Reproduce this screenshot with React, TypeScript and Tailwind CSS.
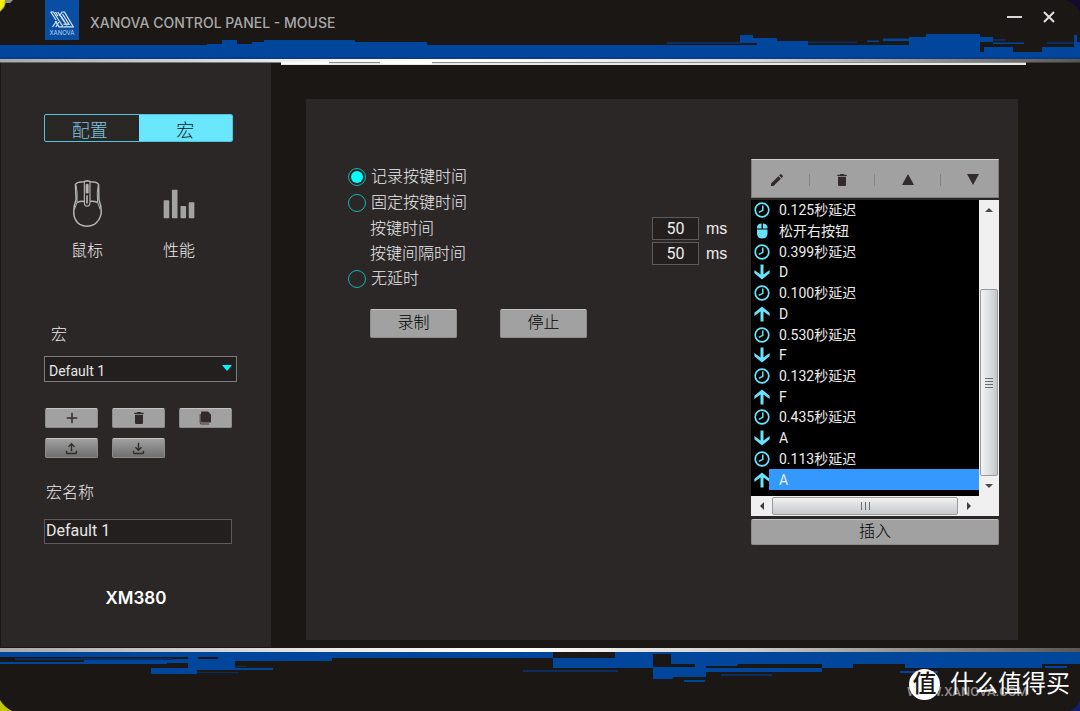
import React, { useState } from "react";
import { MdAdd, MdDelete, MdEdit, MdOutlineFileDownload, MdOutlineFileUpload } from "react-icons/md";

type EventKind = "delay" | "mouse" | "down" | "up";
type MacroEvent = { kind: EventKind; text: string };

const EVENTS: MacroEvent[] = [
  { kind: "delay", text: "0.125秒延迟" },
  { kind: "mouse", text: "松开右按钮" },
  { kind: "delay", text: "0.399秒延迟" },
  { kind: "down", text: "D" },
  { kind: "delay", text: "0.100秒延迟" },
  { kind: "up", text: "D" },
  { kind: "delay", text: "0.530秒延迟" },
  { kind: "down", text: "F" },
  { kind: "delay", text: "0.132秒延迟" },
  { kind: "up", text: "F" },
  { kind: "delay", text: "0.435秒延迟" },
  { kind: "down", text: "A" },
  { kind: "delay", text: "0.113秒延迟" },
  { kind: "up", text: "A" },
];

const GREY_BUTTON =
  "flex items-center justify-center rounded-[2px] border border-[#8c8c8c] border-t-[#c4c4c4] bg-[#a1a1a1] text-[#332b2b]";

const TEXT_BUTTON = `${GREY_BUTTON} pb-px text-black`;

function HeaderArt() {
  return (
    <svg className="absolute inset-x-0 top-0 h-[65px] w-full" viewBox="0 0 1080 65" preserveAspectRatio="none" aria-hidden="true">
      <defs>
        <linearGradient id="railTop" x1="0" x2="1" y1="0" y2="0">
          <stop offset="0" stopColor="#a8a8a8" />
          <stop offset="0.3" stopColor="#f4f4f4" />
          <stop offset="0.45" stopColor="#ffffff" />
          <stop offset="0.7" stopColor="#d8d6d4" />
          <stop offset="0.88" stopColor="#8a8784" />
          <stop offset="1" stopColor="#5a5653" />
        </linearGradient>
      </defs>
      <path d="M0 0H13L10 3H6L4 8L0 12Z" fill="#8f8f8a" />
      <path d="M0 0H5L4 6L0 11Z" fill="#f2f200" />
      <path d="M1066 0H1080V12Q1075 3 1066 0Z" fill="#140a2c" />
      <path
        fill="#00469c"
        d="M0 45H207V44H222V40H237V44H252V42H264V40H355V42H427V45H757V43H740V35H753V38H777V41H808V45H909V37H926V34H980V52H984V47H1013V52H1042V47H1074V35H1077V42H1080V59H0Z"
      />
      <path fill="#00469c" d="M867 40.500H879V42H867ZM883 38.500H909V41H883ZM980 37H993V42H980ZM993 42.500H1024V44H993Z" />
      <path fill="#0d2c5f" d="M667 42H740V44H667ZM808 41.500H857V43H808ZM993 39H1005V41H993ZM1047 42H1074V44H1047Z" />
      <rect x="0" y="57.500" width="1080" height="1" fill="#0a3578" />
      <rect x="0" y="59" width="1080" height="3.500" fill="url(#railTop)" />
      <rect x="329" y="62" width="697" height="1" fill="#8b8e8b" />
      <rect x="281" y="63" width="745" height="2" fill="#e6e8e6" />
      <rect x="281" y="62" width="48" height="2" fill="#ffffff" />
      <rect x="380" y="61" width="52" height="3" fill="#ffffff" />
    </svg>
  );
}

function FooterArt() {
  return (
    <svg className="absolute inset-0 h-full w-full" viewBox="0 647 1080 64" preserveAspectRatio="none" aria-hidden="true">
      <defs>
        <linearGradient id="railBottom" x1="0" x2="1" y1="0" y2="0">
          <stop offset="0" stopColor="#a8a8a8" />
          <stop offset="0.3" stopColor="#e8e8e8" />
          <stop offset="0.48" stopColor="#ffffff" />
          <stop offset="0.7" stopColor="#cccac8" />
          <stop offset="0.88" stopColor="#83807d" />
          <stop offset="1" stopColor="#5a5653" />
        </linearGradient>
      </defs>
      <rect x="0" y="648" width="1080" height="4" fill="url(#railBottom)" />
      <path
        fill="#00469c"
        d="M0 652H553V658H332V661H235V669H188V657H0ZM84 659H188V663H167V664H0V662H84ZM151 668H273V670H197V674H151ZM553 658H615V652H1080V664H1042V668H905V664H853V668H822V664H738L737 666H706V668H822V672H706V677H674L672 679H653V668H553ZM684 680H705V682H684ZM900 671H938V673H900ZM1045 666H1067V668H1045Z"
      />
      <path fill="#1a1613" d="M198 657H218V659H198ZM653 654H671V664H695V667H653ZM822 668H738V664H822Z" />
      <path fill="#00469c" d="M720 668H822V672H720Z" />
      <path fill="#0d2c5f" d="M15 658H173V660H15ZM235 666H247V667H235ZM197 672H239V673H197ZM523 670H618V672H523ZM721 674H772V676H721Z" />
      <path d="M0 700Q4 707 12 711H0Z" fill="#c3c800" />
      <path d="M1080 700Q1077 708 1070 711H1080Z" fill="#12206c" />
    </svg>
  );
}

function LogoMark() {
  return (
    <svg width="24" height="17" viewBox="0 0 24 17" fill="none" stroke="#dbe9f8" strokeWidth="1.200" aria-hidden="true">
      <path d="M0.500 1H3.500L13 15.800H9L5.500 10M0.800 1L6 9M5.500 1L8 5M7.800 1L14 10.500" />
      <path d="M6.500 10L2.500 16M8.800 11L5.800 16M9.500 5L12 1H14.500L23.200 15.800H14L17 15.800M11 5L17 14.500M12.500 3L19.500 14" />
      <path d="M13.500 13.200H19" />
    </svg>
  );
}

function MouseOutline() {
  return (
    <svg width="31" height="48" viewBox="215 209 93 145" fill="none" stroke="#b4b4b4" strokeWidth="4.500" aria-hidden="true">
      <path d="M225 222Q230 214 250 214L260 211L271 214Q290 214 295 222L296 268Q304 290 303 310Q298 333 282 343Q260 354 238 343Q222 333 220 310Q219 290 227 268Z" strokeLinejoin="round" />
      <path d="M227 225Q232 245 230 276L222 298M294 225Q289 245 292 276L300 298" strokeWidth="3" />
      <path d="M230 277Q242 272 252 274M292 277Q280 272 269 274" />
      <path d="M252 215V276Q252 288 260 288Q269 288 269 276V215" strokeWidth="3.500" />
      <rect x="256" y="220" width="9" height="30" rx="4" fill="#b4b4b4" stroke="none" />
      <path d="M260 255V280" strokeWidth="5" />
    </svg>
  );
}

function PerformanceBars() {
  return (
    <svg width="32" height="30" viewBox="490 238 97 90" fill="#a3a3a3" aria-hidden="true">
      <rect x="492" y="272" width="17" height="54" rx="2" />
      <rect x="517" y="240" width="17" height="86" rx="2" />
      <rect x="543" y="289" width="17" height="37" rx="2" />
      <rect x="568" y="278" width="17" height="48" rx="2" />
    </svg>
  );
}

function CopyIcon() {
  return (
    <svg width="13" height="14" viewBox="0 0 13 14" aria-hidden="true">
      <path d="M1.300 3V11.500Q1.300 13 2.800 13H10" fill="none" stroke="#5d5555" strokeWidth="1.500" />
      <path d="M3 0.500H9L12 3.500V11.500H3Q2 11.500 2 10.500V1.500Q2 0.500 3 0.500Z" fill="#332b2b" />
    </svg>
  );
}

function EventIcon({ kind }: { kind: EventKind }) {
  if (kind === "delay") {
    return (
      <svg className="size-4 shrink-0" viewBox="0 0 16 16" fill="none" stroke="#67e2fb" aria-hidden="true">
        <circle cx="8" cy="8" r="6.800" strokeWidth="1.700" />
        <path d="M8.800 3.500V8.300L4.800 10.300" strokeWidth="1.500" />
      </svg>
    );
  }
  if (kind === "mouse") {
    return (
      <svg className="size-4 shrink-0" viewBox="0 0 16 16" fill="#67e2fb" aria-hidden="true">
        <path d="M7.600 0.500V5.500H3V4Q3.500 0.500 7.600 0.500ZM8.900 0.500Q13 0.500 13.500 4V5.500H8.900ZM3 6.500H13.500V11Q13 15.500 8.200 15.500Q3.500 15.500 3 11Z" />
      </svg>
    );
  }
  return (
    <svg className="size-4 shrink-0" viewBox="0 0 16 16" fill="#67e2fb" aria-hidden="true">
      {kind === "down" ? (
        <path d="M6.500 0.500H9.500V10.500L15.600 6V9.200L8 15.500L0.400 9.200V6L6.500 10.500Z" />
      ) : (
        <path d="M6.500 15.500H9.500V5.500L15.600 10V6.800L8 0.500L0.400 6.800V10L6.500 5.500Z" />
      )}
    </svg>
  );
}

function Triangle({ dir, className }: { dir: "up" | "down" | "left" | "right"; className: string }) {
  const d = { up: "M0 10L5 0L10 10Z", down: "M0 0H10L5 10Z", left: "M10 0V10L0 5Z", right: "M0 0V10L10 5Z" }[dir];
  return (
    <svg className={className} viewBox="0 0 10 10" preserveAspectRatio="none" fill="currentColor" aria-hidden="true">
      <path d={d} />
    </svg>
  );
}

function Sidebar() {
  const [name, setName] = useState("Default 1");
  return (
    <aside className="w-[271px] shrink-0 border-l border-[#1b1715] bg-[#2b2727] pt-[51px] pl-[43px]">
      <div className="grid h-7 w-[189px] grid-cols-2 overflow-hidden rounded-[2px] border border-[#4fc6de] text-lg leading-7">
        <button type="button" className="flex items-center justify-center pt-[2px] pr-1 text-[#7fc4de]">配置</button>
        <button type="button" className="flex items-center justify-center bg-[#6ae6ff] pt-[2px] text-[#101c20]">宏</button>
      </div>

      <nav className="mt-9 flex gap-[28px] pl-[11px]">
        <a href="#mouse" className="flex w-16 flex-col items-center gap-[9px]">
          <span className="flex h-[52px] items-center"><MouseOutline /></span>
          <span className="h-6 leading-6">鼠标</span>
        </a>
        <a href="#performance" className="flex w-16 flex-col items-center gap-[9px]">
          <span className="flex h-[52px] items-end pb-[11px]"><PerformanceBars /></span>
          <span className="h-6 leading-6">性能</span>
        </a>
      </nav>

      <label htmlFor="macro" className="mt-[60px] block pl-[7px] leading-6">宏</label>
      <div className="relative mt-[9px] w-[193px]">
        <select id="macro" className="block h-[26px] w-full appearance-none border border-[#7d7d7d] bg-[#231f1f] px-1 pt-[3px] text-sm font-normal text-[#e6e6e6]">
          <option>Default 1</option>
        </select>
        <Triangle dir="down" className="pointer-events-none absolute top-[9px] right-[5px] h-[6px] w-[10px] text-[#00f6ff]" />
      </div>

      <div className="mt-[26px] grid w-[188px] grid-cols-3 gap-x-[14px] gap-y-[10px] pl-px">
        <button type="button" aria-label="新建宏" className={`${GREY_BUTTON} h-5`}><MdAdd size={18} /></button>
        <button type="button" aria-label="删除宏" className={`${GREY_BUTTON} h-5`}><MdDelete size={16} /></button>
        <button type="button" aria-label="复制宏" className={`${GREY_BUTTON} h-5`}><CopyIcon /></button>
        <button type="button" aria-label="导出宏" className={`${GREY_BUTTON} h-5 bg-linear-to-b from-[#a0a0a0] to-[#6f6f6f]`}><MdOutlineFileUpload size={17} /></button>
        <button type="button" aria-label="导入宏" className={`${GREY_BUTTON} h-5 bg-linear-to-b from-[#a0a0a0] to-[#6f6f6f]`}><MdOutlineFileDownload size={17} /></button>
      </div>

      <label htmlFor="macro-name" className="mt-[23px] block pl-[2px] leading-6">宏名称</label>
      <input
        id="macro-name"
        value={name}
        onChange={(e) => setName(e.target.value)}
        className="mt-[14px] block h-[25px] w-[188px] border border-[#5e5a5a] bg-[#231f1f] px-px pb-[2px] text-base font-normal text-[#e6e6e6]"
      />
      <p className="mt-[42px] w-[184px] text-center font-[Inter] text-[17px] leading-6 font-semibold text-white">XM380</p>
    </aside>
  );
}

function TimingForm() {
  const [mode, setMode] = useState("record");
  const radio = (id: string, text: string) => (
    <div className="flex h-[26px] items-center gap-[5px]">
      <input
        type="radio"
        id={id}
        name="timing"
        checked={mode === id}
        onChange={() => setMode(id)}
        className="grid size-[18px] shrink-0 appearance-none place-items-center rounded-full border border-[#14b4b4] before:size-3 before:rounded-full before:content-[''] checked:before:bg-[#00ffff]"
      />
      <label htmlFor={id}>{text}</label>
    </div>
  );
  const duration = (id: string, text: string) => (
    <div className="flex h-[25px] items-center pl-[22px]">
      <label htmlFor={id} className="flex-1">{text}</label>
      <input id={id} defaultValue="50" className="h-[23px] w-[47px] border border-[#5e5a5a] bg-[#231f1f] text-center text-base font-normal" />
      <span className="ml-[7px] w-[45px] font-['Liberation_Sans'] text-base font-normal">ms</span>
    </div>
  );
  return (
    <form className="flex-1 pt-[5px]" onSubmit={(e) => e.preventDefault()}>
      {radio("record", "记录按键时间")}
      {radio("fixed", "固定按键时间")}
      {duration("press", "按键时间")}
      {duration("interval", "按键间隔时间")}
      {radio("none", "无延时")}
      <div className="mt-[17px] flex gap-[43px] pl-[22px]">
        <button type="button" className={`${TEXT_BUTTON} h-[29px] w-[87px]`}>录制</button>
        <button type="button" className={`${TEXT_BUTTON} h-[29px] w-[87px]`}>停止</button>
      </div>
    </form>
  );
}

function EventPanel() {
  const [selected, setSelected] = useState(EVENTS.length - 1);
  return (
    <section className="w-[248px] shrink-0">
      <div className="flex h-[39px] items-center justify-between border border-[#7c7c7c] border-t-[#d0d0d0] bg-[#a1a1a1] px-[14px] pt-[2px] text-[#332b2b]">
        <button type="button" aria-label="编辑" className="flex w-[22px] justify-center"><MdEdit size={16} /></button>
        <i className="h-3 w-px bg-[#838383]" />
        <button type="button" aria-label="删除" className="flex w-[22px] justify-center"><MdDelete size={16} /></button>
        <i className="h-3 w-px bg-[#838383]" />
        <button type="button" aria-label="上移" className="flex w-[22px] justify-center"><Triangle dir="up" className="h-[11px] w-3" /></button>
        <i className="h-3 w-px bg-[#838383]" />
        <button type="button" aria-label="下移" className="flex w-[22px] justify-center"><Triangle dir="down" className="h-[11px] w-3" /></button>
      </div>

      <div className="mt-[2px] flex bg-black">
        <ul className="mb-[6px] grid h-[290px] flex-1 auto-rows-fr text-sm font-normal">
          {EVENTS.map((event, i) => (
            <li key={i} className="flex min-h-0">
              <button type="button" onClick={() => setSelected(i)} className="flex flex-1 items-stretch text-left">
                <span className="flex w-[18px] items-center pl-[3px]"><EventIcon kind={event.kind} /></span>
                <span className={`flex flex-1 items-center pl-[10px] whitespace-nowrap ${selected === i ? "bg-[#3399ff]" : ""}`}>{event.text}</span>
              </button>
            </li>
          ))}
        </ul>
        <div className="flex w-5 flex-col items-center bg-[#f0f0f0] text-[#4a4a4a]">
          <button type="button" aria-label="向上滚动" className="flex h-5 w-5 items-center justify-center"><Triangle dir="up" className="h-1 w-2" /></button>
          <div className="mt-[69px] flex h-[187px] w-[18px] flex-col items-center justify-center gap-[2px] rounded-[2px] border border-[#9b9b9b] bg-linear-to-r from-[#f3f3f3] via-[#dfe0e2] to-[#c4c5c8]">
            <i className="h-px w-2 bg-[#6c6c6c]" />
            <i className="h-px w-2 bg-[#6c6c6c]" />
            <i className="h-px w-2 bg-[#6c6c6c]" />
            <i className="h-px w-2 bg-[#6c6c6c]" />
          </div>
          <button type="button" aria-label="向下滚动" className="flex h-5 w-5 items-center justify-center"><Triangle dir="down" className="h-1 w-2" /></button>
        </div>
      </div>
      <div className="flex h-5 items-center bg-[#f0f0f0] text-[#3c3c3c]">
        <button type="button" aria-label="向左滚动" className="flex h-5 w-[21px] items-center justify-center"><Triangle dir="left" className="h-2 w-1" /></button>
        <div className="flex h-[18px] flex-1 items-center justify-center gap-[3px] rounded-[2px] border border-[#9b9b9b] bg-linear-to-b from-[#f3f3f3] via-[#dadbdd] to-[#c9cacd]">
          <i className="h-2 w-px bg-[#6c6c6c]" />
          <i className="h-2 w-px bg-[#6c6c6c]" />
          <i className="h-2 w-px bg-[#6c6c6c]" />
        </div>
        <button type="button" aria-label="向右滚动" className="mr-5 flex h-5 w-[21px] items-center justify-center"><Triangle dir="right" className="h-2 w-1" /></button>
      </div>
      <button type="button" className={`${TEXT_BUTTON} mt-[3px] h-[26px] w-full`}>插入</button>
    </section>
  );
}

export default function App() {
  return (
    <div className="flex min-h-screen flex-col bg-[#1b1715] font-[Roboto,'Noto_Sans_CJK_SC',sans-serif] text-base font-light text-[#ececec]">
      <header className="relative h-[63px]">
        <HeaderArt />
        <div className="relative flex items-start pr-[22px] pl-[45px]">
          <div className="flex h-10 w-[34px] flex-col items-center bg-[#0a4ea3] pt-[11px]">
            <LogoMark />
            <span className="font-[Inter] text-[6px] leading-[10px] font-normal text-[#b9d2f0]">XANOVA</span>
          </div>
          <h1 className="ml-[11px] pt-[13px] font-[Inter] text-sm leading-5 font-medium text-[#a9a9a9]">XANOVA CONTROL PANEL - MOUSE</h1>
          <div className="ml-auto flex gap-[17px] pt-2">
            <button type="button" aria-label="最小化" className="grid size-[18px] place-items-center">
              <i className="h-[2px] w-[15px] bg-[#d8d8d8]" />
            </button>
            <button type="button" aria-label="关闭" className="grid size-[18px] place-items-center">
              <svg width="12" height="12" viewBox="0 0 12 12" stroke="#e0e0e0" strokeWidth="2" aria-hidden="true">
                <path d="M1 1L11 11M11 1L1 11" />
              </svg>
            </button>
          </div>
        </div>
      </header>

      <div className="flex flex-1">
        <Sidebar />
        <main className="flex flex-1 pt-9 pr-[62px] pb-[7px] pl-[35px]">
          <div className="flex flex-1 items-start bg-[#2b2727] pt-[60px] pr-[19px] pl-[42px]">
            <TimingForm />
            <EventPanel />
          </div>
        </main>
      </div>

      <footer className="relative h-16">
        <FooterArt />
        <a href="#site" className="absolute right-[52px] bottom-[11px] font-[Roboto] text-[13px] leading-4 font-medium text-[#8d8b8a]">WWW.XANOVA.COM</a>
        <div className="absolute right-[10px] bottom-[11px] flex items-center gap-[10px] text-white">
          <span className="grid size-[31px] place-items-center rounded-full bg-white text-2xl leading-none font-medium text-[#1b1715]">值</span>
          <span className="text-2xl leading-8 font-normal">什么值得买</span>
        </div>
      </footer>
    </div>
  );
}
